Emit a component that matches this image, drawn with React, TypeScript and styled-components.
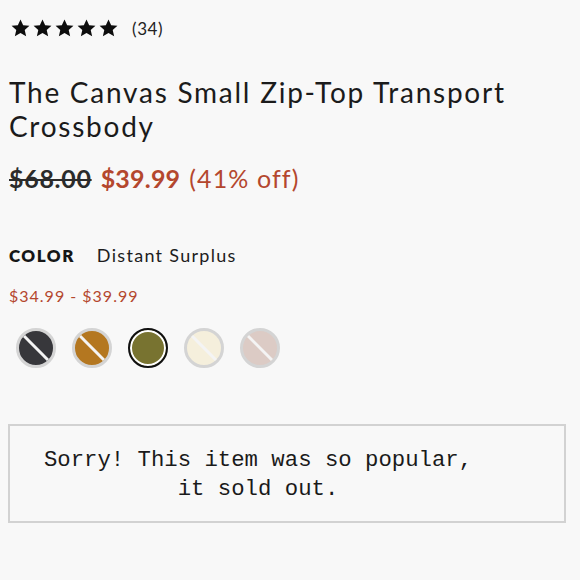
import React from "react";
import styled, { createGlobalStyle } from "styled-components";

const Global = createGlobalStyle`
  html, body { margin: 0; padding: 0; background: #f8f8f8; }
  body { font-family: "Lato", "Noto Sans", sans-serif; color: #1a1a1a; }
`;

const Page = styled.div`
  width: 580px;
  height: 580px;
  box-sizing: border-box;
  padding: 17px 14px 0 9px;
  display: flex;
  flex-direction: column;
`;

const RatingRow = styled.div`
  display: flex;
  align-items: center;
  gap: 14px;
  height: 22px;
`;

const Stars = styled.div`
  display: flex;
  gap: 3px;
  margin-left: 2px;
`;

const Count = styled.span`
  font-size: 17px;
  letter-spacing: 0.6px;
  color: #222;
`;

const Title = styled.h1`
  margin: 36px 0 0 0;
  font-weight: 400;
  font-size: 28px;
  line-height: 34px;
  letter-spacing: 1.75px;
  color: #1b1b1b;
`;

const PriceRow = styled.div`
  margin-top: 20px;
  display: flex;
  align-items: baseline;
  gap: 9px;
  font-size: 25px;
  line-height: 30px;
`;

const OldPrice = styled.span`
  font-weight: 700;
  color: #2b2b2b;
  letter-spacing: 0.7px;
  text-decoration: line-through;
  text-decoration-thickness: 2px;
`;

const SalePrice = styled.span<{ $bold?: boolean }>`
  font-weight: ${(p) => (p.$bold ? 700 : 400)};
  color: #b4472e;
  letter-spacing: ${(p) => (p.$bold ? "0.2px" : "1.1px")};
`;

const ColorRow = styled.div`
  margin-top: 51px;
  display: flex;
  align-items: baseline;
  gap: 22px;
  font-size: 17px;
`;

const ColorLabel = styled.span`
  font-weight: 800;
  letter-spacing: 1.5px;
  color: #161616;
`;

const ColorName = styled.span`
  font-size: 18px;
  color: #1d1d1d;
  letter-spacing: 1.3px;
`;

const Range = styled.div`
  margin-top: 20px;
  font-size: 16px;
  color: #b4472e;
  letter-spacing: 1px;
`;

const Swatches = styled.div`
  margin-top: 23px;
  display: flex;
  gap: 16px;
  padding-left: 7px;
`;

const Swatch = styled.div<{ $color: string; $selected?: boolean }>`
  position: relative;
  width: 40px;
  height: 40px;
  box-sizing: border-box;
  border-radius: 50%;
  background: ${(p) => p.$color};
  border: ${(p) => (p.$selected ? "2px solid #111" : "3px solid #d4d4d4")};
  box-shadow: ${(p) => (p.$selected ? "inset 0 0 0 2px #fff" : "none")};
  overflow: hidden;
`;

const Slash = styled.div`
  position: absolute;
  left: 50%;
  top: 50%;
  width: 140%;
  height: 3px;
  background: #f4f4f4;
  transform: translate(-50%, -50%) rotate(45deg);
`;

const SoldOut = styled.div`
  margin-top: 56px;
  margin-left: -1px;
  border: 2px solid #d2d2d2;
  height: 99px;
  box-sizing: border-box;
  padding-right: 58px;
  padding-top: 2px;
  display: flex;
  align-items: center;
  justify-content: center;
  text-align: center;
  font-family: "Liberation Mono", "Courier New", monospace;
  font-size: 22.3px;
  line-height: 29px;
  color: #1a1a1a;
`;

const Star = () => (
  <svg width="19" height="18" viewBox="0 0 24 23">
    <path
      d="M12 0.6l3.4 7.3 8 0.8-6 5.4 1.8 7.9L12 18l-7.2 4 1.8-7.9-6-5.4 8-0.8z"
      fill="#0d0d0d"
    />
  </svg>
);

const swatches = [
  { color: "#37373b" },
  { color: "#b47720" },
  { color: "#787330", selected: true },
  { color: "#f5efdc" },
  { color: "#dccbc5" },
];

export default function App() {
  return (
    <>
      <Global />
      <Page>
        <RatingRow>
          <Stars>
            {[0, 1, 2, 3, 4].map((i) => (
              <Star key={i} />
            ))}
          </Stars>
          <Count>(34)</Count>
        </RatingRow>
        <Title>
          The Canvas Small Zip-Top Transport
          <br />
          Crossbody
        </Title>
        <PriceRow>
          <OldPrice>$68.00</OldPrice>
          <SalePrice $bold>$39.99</SalePrice>
          <SalePrice>(41% off)</SalePrice>
        </PriceRow>
        <ColorRow>
          <ColorLabel>COLOR</ColorLabel>
          <ColorName>Distant Surplus</ColorName>
        </ColorRow>
        <Range>$34.99 - $39.99</Range>
        <Swatches>
          {swatches.map((s, i) => (
            <Swatch key={i} $color={s.color} $selected={s.selected}>
              {!s.selected && <Slash />}
            </Swatch>
          ))}
        </Swatches>
        <SoldOut>
          Sorry! This item was so popular,
          <br />
          it sold out.
        </SoldOut>
      </Page>
    </>
  );
}
